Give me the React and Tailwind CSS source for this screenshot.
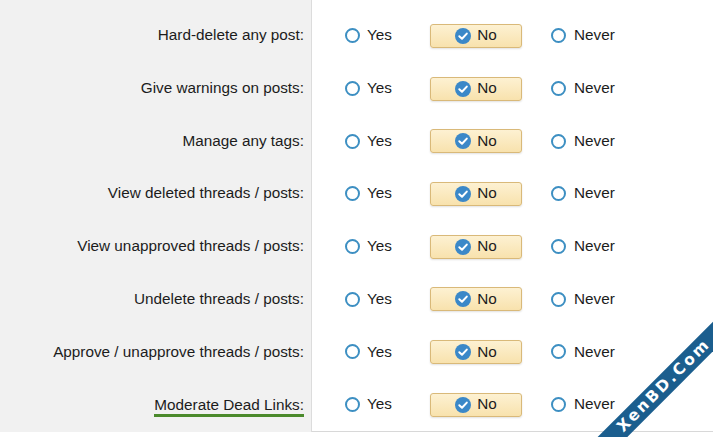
import React from "react";

const rows = [
  "Hard-delete any post:",
  "Give warnings on posts:",
  "Manage any tags:",
  "View deleted threads / posts:",
  "View unapproved threads / posts:",
  "Undelete threads / posts:",
  "Approve / unapprove threads / posts:",
  "Moderate Dead Links:",
];

const Radio = () => (
  <span className="inline-block w-[15px] h-[15px] rounded-full border-[2.5px] border-[#3d8fc2] bg-white shrink-0" />
);

const Checked = () => (
  <svg width="16" height="16" viewBox="0 0 16 16" className="shrink-0">
    <circle cx="8" cy="8" r="8" fill="#3b88c8" />
    <path d="M4.3 8.2 L7 10.8 L11.8 5.6" fill="none" stroke="#fff" strokeWidth="2" strokeLinecap="round" strokeLinejoin="round" />
  </svg>
);

const Row = ({ label, highlight }) => (
  <div className="flex h-[52.85px] items-center">
    <div className="w-[312px] shrink-0 pr-[8px] flex justify-end">
      <span className={highlight ? "border-b-[3px] border-[#4b8a2c] leading-[17px] pb-[1px] translate-y-[2px]" : ""}>
        {label}
      </span>
    </div>
    <div className="flex items-center pl-[33px]">
      <div className="flex items-center gap-[7px] w-[85px]">
        <Radio />
        <span>Yes</span>
      </div>
      <div className="flex items-center justify-center gap-[6px] w-[92px] h-[24px] rounded-[3px] border border-[#d9b979] bg-gradient-to-b from-[#fdf1d2] to-[#f8e2ad] shadow-[0_1px_2px_rgba(0,0,0,0.12)]">
        <Checked />
        <span>No</span>
      </div>
      <div className="flex items-center gap-[8px] ml-[29px]">
        <Radio />
        <span>Never</span>
      </div>
    </div>
  </div>
);

export default function App() {
  return (
    <div className="relative w-[713px] h-[437px] overflow-hidden bg-white text-[15.3px] text-[#1c1c1c] font-['Liberation_Sans',Arial,sans-serif]">
      <div className="flex h-[432px] border-b border-[#d8d8d8]">
        <div className="absolute left-0 top-0 w-[312px] h-[432px] bg-[#f1f1f1] border-r border-[#dcdcdc]" />
        <div className="relative flex flex-col pt-[9.5px] w-full">
          {rows.map((r, i) => (
            <Row key={r} label={r} highlight={i === rows.length - 1} />
          ))}
        </div>
      </div>

      {/* watermark ribbon */}
      <div className="absolute left-[554px] top-[375px] w-[220px] h-[21px] -rotate-45 bg-[#1b5e8e] flex items-center justify-center">
        <span className="text-white font-bold text-[15.5px] tracking-[2.5px] font-['DejaVu_Sans',Verdana,sans-serif]">
          XenBD.Com
        </span>
      </div>
    </div>
  );
}
